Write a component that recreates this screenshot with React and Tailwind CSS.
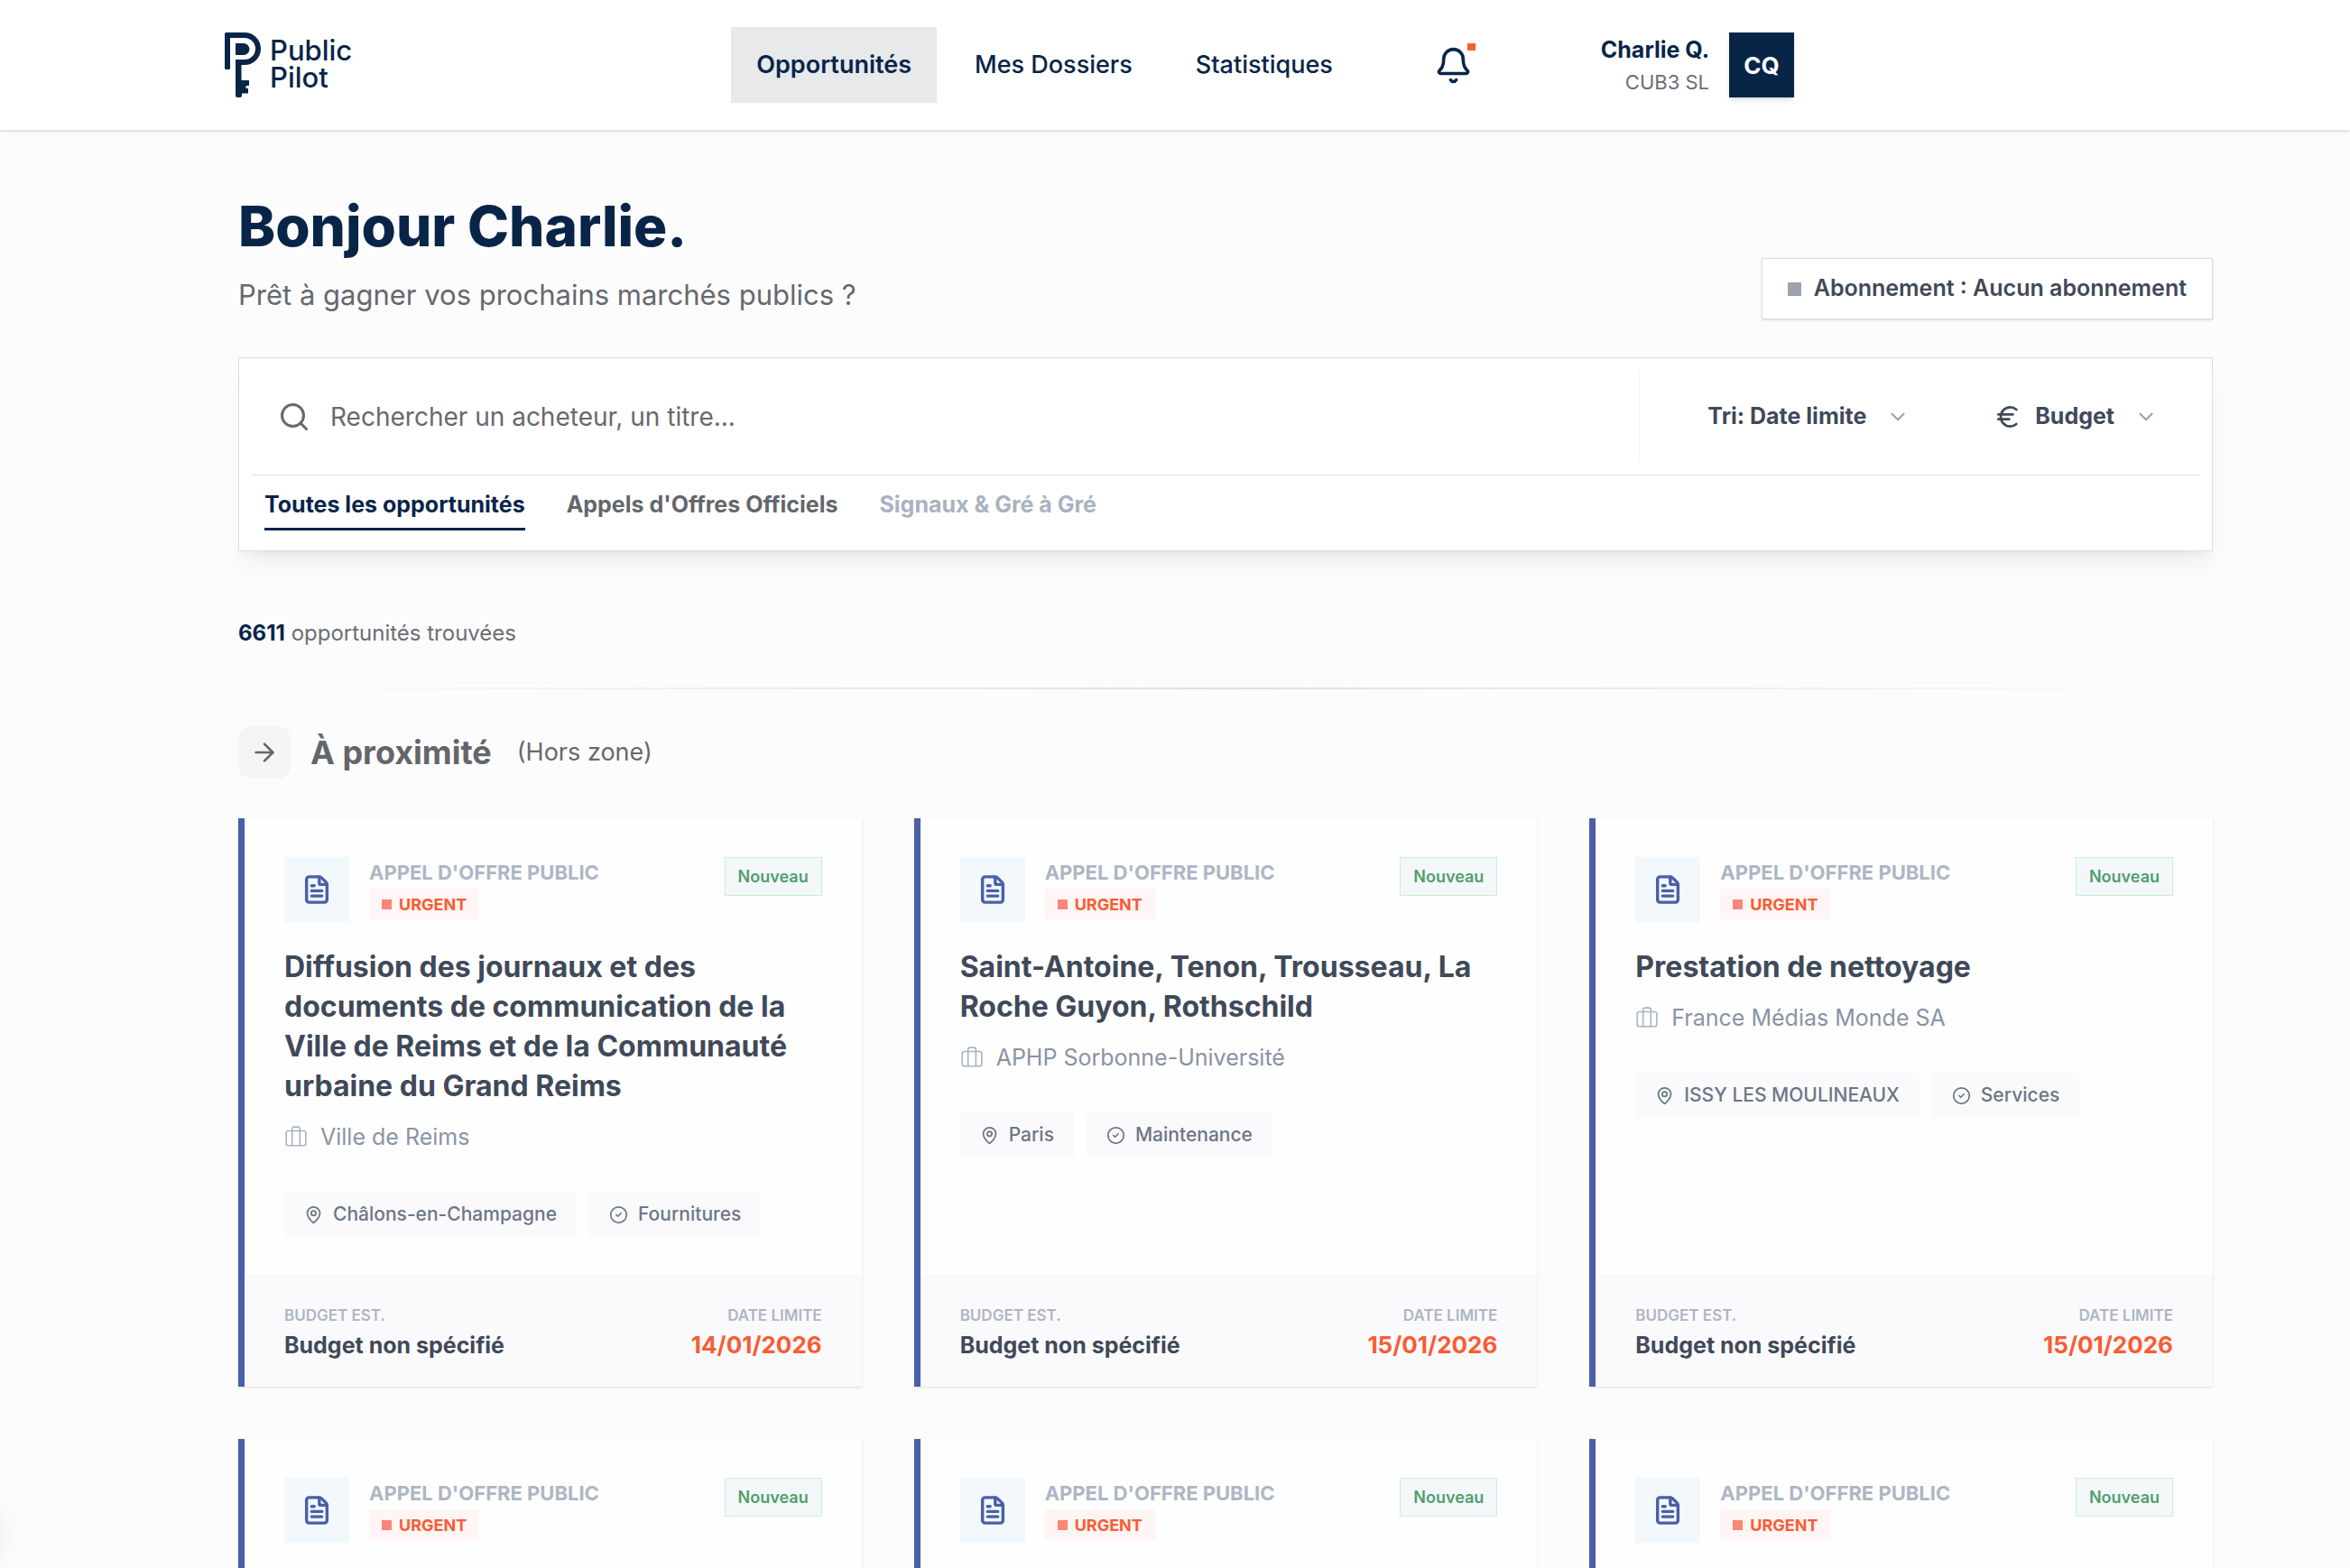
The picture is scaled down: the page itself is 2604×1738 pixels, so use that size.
import { useState } from 'react';
import { ArrowRight, Bell, ChevronDown, CircleCheck, Euro, FileText, MapPin, Search } from 'lucide-react';

const NAV = ['Opportunités', 'Mes Dossiers', 'Statistiques'];

const TABS = [
  { id: 'toutes', label: 'Toutes les opportunités' },
  { id: 'officiels', label: "Appels d'Offres Officiels" },
  { id: 'signaux', label: 'Signaux & Gré à Gré', disabled: true },
];

const OPPORTUNITES = [
  {
    id: 1,
    titre: 'Diffusion des journaux et des documents de communication de la Ville de Reims et de la Communauté urbaine du Grand Reims',
    acheteur: 'Ville de Reims',
    lieu: 'Châlons-en-Champagne',
    type: 'Fournitures',
    date: '14/01/2026',
  },
  {
    id: 2,
    titre: 'Saint-Antoine, Tenon, Trousseau, La Roche Guyon, Rothschild',
    acheteur: 'APHP Sorbonne-Université',
    lieu: 'Paris',
    type: 'Maintenance',
    date: '15/01/2026',
  },
  {
    id: 3,
    titre: 'Prestation de nettoyage',
    acheteur: 'France Médias Monde SA',
    lieu: 'ISSY LES MOULINEAUX',
    type: 'Services',
    date: '15/01/2026',
  },
  { id: 4 },
  { id: 5 },
  { id: 6 },
];

const Logo = () => (
  <a href="#" className="flex items-center gap-[10px] text-[#082548]">
    <svg width="40" height="72" viewBox="0 0 40 72" fill="currentColor" aria-hidden="true">
      <path d="M1.5 0H22a18 18 0 0 1 0 36h-3.500v17H27v6h-3.500v3H26v5.500h-7V70q0 2-2 2h-3q-2 0-2-2V30h10a12 12 0 0 0 0-24H6v33.500q0 1.500-1.500 1.500h-3Q0 41 0 39.500v-38Q0 0 1.500 0Z" />
      <path d="M12 12h9a6.500 6.500 0 0 1 0 13h-9Z" />
    </svg>
    <span className="flex flex-col pb-[3px] text-[31px] leading-[30px] font-medium">
      <span>Public</span>
      <span>Pilot</span>
    </span>
  </a>
);

const BagIcon = () => (
  <svg width="26" height="26" viewBox="0 0 24 24" fill="none" stroke="currentColor" strokeWidth="1.500" strokeLinecap="round" strokeLinejoin="round" className="text-[#aab4c3]" aria-hidden="true">
    <rect x="2" y="6" width="20" height="15" rx="2" />
    <path d="M8 21V4a2 2 0 0 1 2-2h4a2 2 0 0 1 2 2v17" />
  </svg>
);

const Header = () => (
  <header className="border-b border-[#e6e7e8] bg-white shadow-sm">
    <div className="ml-[249px] flex h-36 max-w-[1739px] items-center justify-between">
      <Logo />
      <div className="flex items-center">
        <nav className="flex items-center gap-[14px]">
          {NAV.map((n, i) => (
            <a key={n} href="#"
              className={`flex h-[84px] items-center px-7 text-[27px] text-[#082548] ${i === 0 ? 'bg-[#e7e9eb] font-semibold' : 'font-medium'}`}>
              {n}
            </a>
          ))}
        </nav>
        <button type="button" aria-label="Notifications" className="relative ml-[70px] p-[14px] text-[#082548]">
          <Bell size={43} strokeWidth={2} />
          <span className="absolute top-[11px] right-[11px] h-2 w-[9px] bg-[#fa5c35]" />
        </button>
        <div className="ml-[128px] flex items-center gap-[22px]">
          <div className="pt-[2px] text-right">
            <p className="text-[25px] leading-9 font-bold text-[#082548]">Charlie Q.</p>
            <p className="text-[22px] leading-9 text-[#6a6e75]">CUB3 SL</p>
          </div>
          <div className="flex size-[72px] items-center justify-center bg-[#082548] text-[26px] font-bold text-white shadow-md">CQ</div>
        </div>
      </div>
    </div>
  </header>
);

const Tag = ({ icon: Icon, children }) => (
  <span className="flex h-[50px] items-center gap-[11px] bg-[#fafafc] px-[22px] text-[21px] font-medium text-[#6c7686]">
    <Icon size={21} strokeWidth={2} />
    {children}
  </span>
);

const Carte = ({ opp }) => (
  <article className="flex min-h-[400px] flex-col border-l-[7px] border-[#4a5fa8] bg-[#fefefe] shadow">
    <div className="flex-1 px-[44px] pt-[43px] pb-[43px]">
      <div className="flex items-start justify-between">
        <div className="flex gap-[22px]">
          <div className="flex size-[72px] items-center justify-center bg-[#f2f8fb] text-[#4a5fa8]">
            <FileText size={34} strokeWidth={2.4} />
          </div>
          <div>
            <p className="text-[22px] leading-[35px] font-bold text-[#adb6c5] uppercase">Appel d'offre public</p>
            <span className="flex h-[34px] w-fit items-center gap-2 bg-[#fff5f4] px-[14px] text-[18px] font-bold text-[#f95c33]">
              <span className="size-[11px] bg-[#fa8678]" />
              URGENT
            </span>
          </div>
        </div>
        <span className="flex h-[43px] items-center border border-[#c3f3d3] bg-[#f4f7fa] px-[14px] text-[18px] font-semibold text-[#4f9f6b]">Nouveau</span>
      </div>
      {opp.titre && (
        <>
          <h3 className="mt-7 text-[32px] leading-[44px] font-bold text-[#404959]">{opp.titre}</h3>
          <p className="mt-4 flex items-center gap-[14px] text-[25px] leading-9 text-[#8993a5]">
            <BagIcon />
            {opp.acheteur}
          </p>
          <div className="mt-[43px] flex gap-[14px]">
            <Tag icon={MapPin}>{opp.lieu}</Tag>
            <Tag icon={CircleCheck}>{opp.type}</Tag>
          </div>
        </>
      )}
    </div>
    {opp.date && (
      <div className="flex h-[123px] items-center justify-between border-t border-[#f5f5f7] bg-[#fafafc] px-[44px]">
        <div>
          <p className="text-[17px] leading-[29px] font-semibold text-[#adb6c5]">BUDGET EST.</p>
          <p className="text-[25px] leading-9 font-bold text-[#404959]">Budget non spécifié</p>
        </div>
        <div className="text-right">
          <p className="text-[17px] leading-[29px] font-semibold text-[#adb6c5]">DATE LIMITE</p>
          <p className="text-[26px] leading-9 font-bold text-[#f95c33]">{opp.date}</p>
        </div>
      </div>
    )}
  </article>
);

const App = () => {
  const [tab, setTab] = useState('toutes');
  const [recherche, setRecherche] = useState('');

  return (
    <div className="relative h-screen overflow-hidden bg-[#fcfcfc] font-['Inter','Liberation_Sans',sans-serif]">
      <Header />

      <main className="pt-[70px] pr-[152px] pl-[264px]">
        {/* Accueil */}
        <div className="flex items-end justify-between">
          <div>
            <h1 className="text-[62px] leading-[72px] font-extrabold text-[#082548]">Bonjour Charlie.</h1>
            <p className="mt-[15px] pb-[2px] text-[31px] leading-[50px] text-[#66696e]">Prêt à gagner vos prochains marchés publics ?</p>
          </div>
          <div className="flex h-[68px] items-center gap-[14px] border border-[#dcdde0] bg-white px-7 text-[25px] font-semibold text-[#404959] shadow-sm">
            <span className="size-[15px] bg-[#9ca3ad]" />
            Abonnement : Aucun abonnement
          </div>
        </div>

        {/* Recherche et filtres */}
        <section className="mt-[42px] border border-[#dcdde0] bg-white p-[14px] shadow-xl shadow-black/5">
          <div className="flex h-[102px] items-center">
            <label className="flex h-full flex-1 items-center gap-[22px] border-r border-[#f3f4f5] pl-[29px]">
              <Search size={36} strokeWidth={2} className="text-[#66696e]" />
              <input value={recherche} onChange={(e) => setRecherche(e.target.value)} aria-label="Rechercher"
                placeholder="Rechercher un acheteur, un titre..."
                className="flex-1 text-[28px] text-[#404959] outline-none placeholder:text-[#66696e]" />
            </label>
            <button type="button" className="flex items-center gap-[22px] pl-[75px] text-[25px] font-bold text-[#404959]">
              Tri: Date limite
              <ChevronDown size={26} strokeWidth={2} className="text-[#9ca3af]" />
            </button>
            <button type="button" className="flex items-center gap-[14px] pr-[46px] pl-[93px] text-[25px] font-bold text-[#404959]">
              <Euro size={32} strokeWidth={2} />
              Budget
              <ChevronDown size={26} strokeWidth={2} className="ml-2 text-[#9ca3af]" />
            </button>
          </div>
          <div role="tablist" className="mt-[13px] flex gap-[46px] border-t border-[#dcdde0] px-[14px] pt-[14px] pb-2">
            {TABS.map((t) => (
              <button key={t.id} type="button" role="tab" aria-selected={tab === t.id} disabled={t.disabled} onClick={() => setTab(t.id)}
                className={`h-[47px] border-b-[3px] pb-2 text-[25px] font-bold ${
                  t.disabled ? 'border-transparent text-[#a9b2c0]' :
                  tab === t.id ? 'border-[#082548] text-[#082548]' :
                  'border-transparent text-[#63666b]'
                }`}>
                {t.label}
              </button>
            ))}
          </div>
        </section>

        <p className="mt-[73px] text-[24px] leading-9 text-[#6a6e75]">
          <span className="font-bold text-[#082548]">6611</span> opportunités trouvées
        </p>
        <div className="mt-[42px] h-[2px] bg-linear-to-r from-transparent via-[#dfe0e2] to-transparent" />

        {/* À proximité */}
        <div className="mt-[41px] flex items-center">
          <span className="flex size-[58px] items-center justify-center rounded-[14px] bg-[#f5f5f6] text-[#63666b]">
            <ArrowRight size={32} strokeWidth={2} />
          </span>
          <h2 className="ml-[22px] text-[36px] font-bold text-[#63666b]">À proximité</h2>
          <span className="ml-7 text-[27px] text-[#66696e]">(Hors zone)</span>
        </div>

        <div className="mt-[44px] grid grid-cols-3 gap-x-[58px] gap-y-[58px]">
          {OPPORTUNITES.map((opp) => <Carte key={opp.id} opp={opp} />)}
        </div>
      </main>

      <div className="absolute bottom-1 left-[-72px] size-[72px] rounded-full bg-[#f8f8f8] shadow-[0_4px_32px_#00000014]" />
    </div>
  );
};

export default App;
